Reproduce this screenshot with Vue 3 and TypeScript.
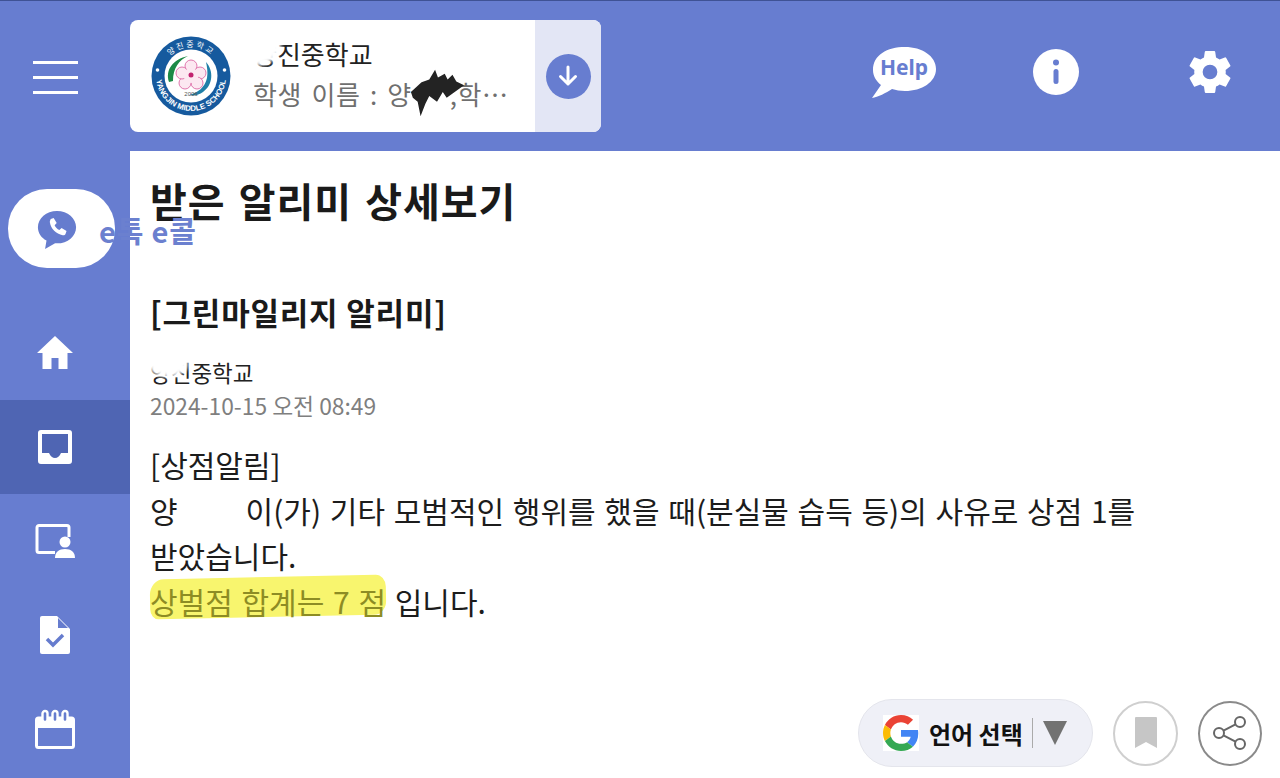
<template>
  <div class="page">
    <aside class="side">
      <button class="menu" aria-label="menu"><span></span><span></span><span></span></button>

      <div class="talk">
        <svg width="42" height="42" viewBox="0 0 44 44">
          <path d="M22 2C10.700 2 2 9.600 2 19c0 6 3.500 11 9 14l-1.500 9L20 36h2c11.300 0 20-7.600 20-17S33.300 2 22 2z" fill="#667cce" />
          <path d="M15.500 10.500l3-1 3.200 5.200-2.200 2.300c.9 2.200 2.700 4 5 5l2.300-2.200 5.200 3.200-1 3c-.5 1.300-1.700 1.700-3 1.500-7-1.100-12.300-6.500-13.500-13.500-.2-1.300.7-3 1-3.500z" fill="#fff" />
        </svg>
      </div>
      <span class="talk-label">e톡 e콜</span>

      <nav class="nav">
        <a v-for="item in navItems" :key="item.id" class="nav-row" :class="{ active: item.id === 'inbox' }">
          <svg v-if="item.id === 'home'" width="38" height="36" viewBox="0 0 38 36" fill="#fff">
            <path d="M19 1L1 18h5.500v16h9V23h7v11h9V18H37L19 1z" />
          </svg>
          <svg v-else-if="item.id === 'inbox'" width="36" height="36" viewBox="0 0 36 36">
            <path fill="#fff" fill-rule="evenodd" d="M4 1h28a3 3 0 0 1 3 3v28a3 3 0 0 1-3 3H4a3 3 0 0 1-3-3V4a3 3 0 0 1 3-3zm1 4v19h7c1.500 3.500 3.500 5 6 5s4.500-1.500 6-5h7V5H5z" />
          </svg>
          <svg v-else-if="item.id === 'board'" width="40" height="36" viewBox="0 0 40 36">
            <path fill="none" stroke="#fff" stroke-width="3" d="M34 14V4.500a2 2 0 0 0-2-2H4a2 2 0 0 0-2 2v23a2 2 0 0 0 2 2h16" />
            <circle cx="30" cy="19" r="5.500" fill="#fff" />
            <path fill="#fff" d="M20 35c0-6 4-9 10-9s10 3 10 9H20z" />
          </svg>
          <svg v-else-if="item.id === 'doc'" width="32" height="40" viewBox="0 0 32 40">
            <path fill="#fff" d="M3 1h15l13 13v23a2 2 0 0 1-2 2H3a2 2 0 0 1-2-2V3a2 2 0 0 1 2-2z" />
            <path fill="#667cce" d="M19 3l10 10H19z" />
            <path fill="none" stroke="#667cce" stroke-width="3.500" d="M8 24l6 6 10-10" />
          </svg>
          <svg v-else width="40" height="40" viewBox="0 0 40 40">
            <rect x="1.500" y="9" width="37" height="29.500" rx="2" fill="none" stroke="#fff" stroke-width="3" />
            <rect x="1.500" y="9" width="37" height="10" fill="#fff" />
            <g fill="#667cce" stroke="#fff" stroke-width="2.400">
              <rect x="7.500" y="2" width="5" height="11" rx="2.500" />
              <rect x="17.500" y="2" width="5" height="11" rx="2.500" />
              <rect x="27.500" y="2" width="5" height="11" rx="2.500" />
            </g>
          </svg>
        </a>
      </nav>
    </aside>

    <div class="main">
      <header class="top">
        <div class="card">
          <svg class="logo" width="80" height="80" viewBox="0 0 80 80">
            <defs>
              <path id="arcTop" d="M11 40a29 29 0 0 1 58 0" />
              <path id="arcBottom" d="M5 40a35 35 0 0 0 70 0" />
            </defs>
            <circle cx="40" cy="40" r="39.500" fill="#165a9e" />
            <circle cx="40" cy="40" r="26.500" fill="#fff" />
            <text class="logo-top"><textPath href="#arcTop" startOffset="50%" text-anchor="middle">양진중학교</textPath></text>
            <text class="logo-bottom"><textPath href="#arcBottom" startOffset="50%" text-anchor="middle">YANGJIN MIDDLE SCHOOL</textPath></text>
            <circle cx="6.500" cy="34" r="1.800" fill="#fff" />
            <circle cx="73.500" cy="34" r="1.800" fill="#fff" />
            <path d="M18 46c-4-12 4-23 19-26-9 4-15 12-15 25z" fill="#1c8a46" />
            <path d="M55 26c8 9 7 23-3 30-4 3-9 4-14 3 9-2 16-8 18-17 1-6 0-11-1-16z" fill="#1f7fa8" />
            <g fill="#fce8f1" stroke="#dc6aa6" stroke-width=".9">
              <circle cx="40" cy="30" r="6" />
              <circle cx="49" cy="37" r="6" />
              <circle cx="46" cy="47" r="6" />
              <circle cx="34" cy="47" r="6" />
              <circle cx="31" cy="37" r="6" />
            </g>
            <circle cx="40" cy="39.500" r="7.500" fill="#fce8f1" />
            <circle cx="40" cy="39" r="2.500" fill="#c2226f" />
            <text x="40" y="60" class="logo-year">2006</text>
          </svg>
          <div class="card-text">
            <div class="school">양진중학교</div>
            <div class="student">학생 이름 : 양<span class="blank-head"></span>,학년 반 번호</div>
            <span class="wipe wipe-head"></span>
            <svg class="scribble" width="58" height="50" viewBox="0 0 60 50">
              <path fill="#232323" d="M3 24L14 14 22 11 28 1 31 9 38 5 41 11 46 6 50 13 58 17 44 27 40 30 36 24 30 34 22 28 18 36 13 49 10 34 5 30z" />
            </svg>
          </div>
          <button class="card-arrow" aria-label="open">
            <span class="arrow-dot">
              <svg width="24" height="24" viewBox="0 0 24 24" fill="none" stroke="#fff" stroke-width="3" stroke-linecap="round" stroke-linejoin="round">
                <path d="M12 3v17M4.500 12.500L12 20l7.500-7.500" />
              </svg>
            </span>
          </button>
        </div>

        <div class="top-icons">
          <svg width="66" height="53" viewBox="0 0 66 53">
            <path fill="#fff" d="M34 1C16 1 2 9 2 24c0 6 3 11 8 15L1 52c6-1 14-5 20-9 4 1 8 2 13 2 17 0 31-9 31-22S51 1 34 1z" />
            <text x="33" y="29" class="help-text">Help</text>
          </svg>
          <svg width="46" height="46" viewBox="0 0 46 46">
            <circle cx="23" cy="23" r="23" fill="#fff" />
            <circle cx="23" cy="13.500" r="3" fill="#677dd0" />
            <rect x="20.500" y="20" width="5" height="15" rx="2.500" fill="#677dd0" />
          </svg>
          <svg class="gear" width="42" height="42" viewBox="2 2 20 20">
            <path fill="#fff" d="M19.430 12.980c.04-.32.07-.64.07-.98s-.03-.66-.07-.98l2.110-1.650c.19-.15.240-.42.120-.64l-2-3.460c-.12-.22-.39-.3-.61-.22l-2.490 1c-.52-.4-1.080-.73-1.690-.98l-.38-2.650A.488.488 0 0 0 14 2h-4c-.25 0-.46.180-.49.420l-.38 2.650c-.61.250-1.170.59-1.690.98l-2.490-1c-.23-.09-.49 0-.61.220l-2 3.460c-.13.220-.07.490.12.640l2.110 1.650c-.04.320-.07.650-.07.980s.03.660.07.980l-2.110 1.650c-.19.150-.240.420-.12.640l2 3.460c.12.220.39.300.61.220l2.490-1c.52.400 1.080.730 1.690.980l.38 2.650c.03.240.24.420.49.420h4c.25 0 .46-.180.49-.42l.38-2.650c.61-.250 1.170-.590 1.690-.980l2.490 1c.23.090.49 0 .61-.220l2-3.460c.12-.220.070-.490-.12-.640l-2.110-1.650zM12 15.500a3.500 3.500 0 1 1 0-7 3.500 3.500 0 0 1 0 7z" />
          </svg>
        </div>
      </header>

      <main class="content">
        <h1>받은 알리미 상세보기</h1>
        <h2>[그린마일리지 알리미]</h2>
        <div class="sender">
          <span class="wipe wipe-sender"></span>
          양진중학교
        </div>
        <div class="date">2024-10-15 오전 08:49</div>
        <div class="message">
          <p>[상점알림]</p>
          <p>양<span class="blank-name"></span>이(가) 기타 모범적인 행위를 했을 때(분실물 습득 등)의 사유로 상점 1를 받았습니다.</p>
          <p><mark>상벌점 합계는 7 점</mark> 입니다.</p>
        </div>
      </main>
    </div>

    <div class="actions">
      <button class="lang">
        <svg class="g-logo" width="36" height="36" viewBox="0 0 48 48">
          <path fill="#EA4335" d="M24 9.500c3.540 0 6.710 1.220 9.210 3.600l6.850-6.850C35.900 2.380 30.470 0 24 0 14.620 0 6.510 5.380 2.560 13.220l7.980 6.190C12.430 13.720 17.740 9.500 24 9.500z" />
          <path fill="#4285F4" d="M46.980 24.550c0-1.570-.15-3.090-.38-4.550H24v9.020h12.940c-.58 2.960-2.260 5.480-4.780 7.180l7.730 6c4.510-4.180 7.090-10.360 7.090-17.650z" />
          <path fill="#FBBC05" d="M10.530 28.590c-.48-1.450-.76-2.990-.76-4.590s.27-3.140.76-4.590l-7.980-6.190C.92 16.460 0 20.120 0 24c0 3.880.92 7.540 2.560 10.780l7.970-6.190z" />
          <path fill="#34A853" d="M24 48c6.480 0 11.930-2.130 15.890-5.810l-7.730-6c-2.150 1.450-4.920 2.300-8.160 2.300-6.260 0-11.570-4.220-13.470-9.910l-7.980 6.190C6.510 42.620 14.620 48 24 48z" />
        </svg>
        <span class="lang-text">언어 선택</span>
        <span class="lang-sep"></span>
        <span class="lang-caret"></span>
      </button>
      <button class="round bookmark" aria-label="bookmark">
        <svg width="24" height="32" viewBox="0 0 24 32"><path fill="#c6c6c6" d="M2 0h20a1 1 0 0 1 1 1v30l-11-6-11 6V1a1 1 0 0 1 1-1z" /></svg>
      </button>
      <button class="round share" aria-label="share">
        <svg width="36" height="36" viewBox="0 0 36 36" fill="none" stroke="#666" stroke-width="2">
          <circle cx="28" cy="7" r="5" />
          <circle cx="7" cy="18" r="5" />
          <circle cx="28" cy="29" r="5" />
          <path d="M11.500 15.700l12-6.400M11.500 20.300l12 6.400" />
        </svg>
      </button>
    </div>
  </div>
</template>

<script setup lang="ts">
const navItems = [
  { id: 'home' },
  { id: 'inbox' },
  { id: 'board' },
  { id: 'doc' },
  { id: 'calendar' },
];
</script>

<style>
html, body { margin: 0; background: #fff; }
</style>

<style scoped>
.page {
  position: relative;
  display: flex;
  height: 778px;
  overflow: hidden;
  background: #677dd0;
  border-top: 1px solid #3f5295;
  box-sizing: border-box;
  font-family: "Noto Sans CJK KR", "Noto Sans", sans-serif;
  color: #1c1c1c;
}
button { border: 0; padding: 0; background: none; font-family: inherit; }

.side { position: relative; width: 130px; flex: none; }
.menu {
  display: flex;
  flex-direction: column;
  gap: 12px;
  width: 45px;
  margin: 60px 0 0 33px;
}
.menu span { display: block; height: 3px; background: #fff; }
.talk {
  position: absolute;
  left: 8px;
  top: 188px;
  width: 107px;
  height: 79px;
  border-radius: 39px;
  background: #fff;
  display: flex;
  align-items: center;
  padding-left: 28px;
  padding-top: 3px;
  box-sizing: border-box;
}
.talk-label {
  position: absolute;
  left: 99px;
  top: 209px;
  z-index: 3;
  font-size: 29px;
  line-height: 40px;
  font-weight: 700;
  letter-spacing: 0.800px;
  color: #6b80cf;
  white-space: nowrap;
}
.nav { position: absolute; left: 0; right: 0; top: 305px; }
.nav-row {
  display: flex;
  align-items: center;
  justify-content: center;
  height: 94px;
  padding-right: 20px;
  box-sizing: border-box;
}
.nav-row.active { background: #4f65b3; }

.main { flex: 1; min-width: 0; display: flex; flex-direction: column; }
.top {
  display: flex;
  align-items: flex-start;
  height: 150px;
  flex: none;
  padding-top: 19px;
  box-sizing: border-box;
}
.card {
  display: flex;
  align-items: center;
  width: 471px;
  height: 112px;
  border-radius: 8px;
  background: #fff;
  overflow: hidden;
}
.logo { flex: none; margin-left: 21px; }
.logo-top { font-size: 8px; fill: #fff; letter-spacing: 2px; }
.logo-bottom { font-size: 7.800px; font-weight: 700; fill: #fff; font-family: "Liberation Sans", sans-serif; }
.logo-year { font-size: 6px; fill: #555; text-anchor: middle; font-family: "Liberation Sans", sans-serif; }
.card-text { position: relative; flex: 1; min-width: 0; padding: 0 24px 4px 22px; }
.school { font-size: 26px; line-height: 40px; color: #222; }
.student {
  font-size: 26px;
  line-height: 40px;
  word-spacing: 3px;
  letter-spacing: 0.600px;
  color: #6f6f6f;
  white-space: nowrap;
  overflow: hidden;
  text-overflow: ellipsis;
}
.blank-head { display: inline-block; width: 38px; }
.wipe { position: absolute; background: #fff; border-radius: 50%; filter: blur(2px); }
.wipe-head { left: 0; top: -12px; width: 50px; height: 44px; }
.scribble { position: absolute; left: 177px; top: 34px; }
.card-arrow {
  flex: none;
  align-self: stretch;
  display: flex;
  align-items: center;
  justify-content: center;
  width: 66px;
  background: #e3e6f5;
}
.arrow-dot {
  display: flex;
  align-items: center;
  justify-content: center;
  width: 45px;
  height: 45px;
  border-radius: 50%;
  background: #677dd0;
}
.top-icons {
  display: flex;
  align-items: center;
  gap: 96px;
  height: 104px;
  margin-left: 270px;
}
.gear { margin-left: 14px; }
.help-text { font-size: 21px; font-weight: 700; fill: #677dd0; text-anchor: middle; font-family: "Noto Sans", sans-serif; }

.content { flex: 1; background: #fff; padding: 0 130px 0 20px; }
h1 {
  margin: 20px 0 0;
  font-size: 40px;
  line-height: 58px;
  font-weight: 700;
  letter-spacing: 1px;
  word-spacing: 3px;
  color: #1a1a1a;
}
h2 {
  margin: 62px 0 0;
  font-size: 31px;
  line-height: 42px;
  font-weight: 700;
  letter-spacing: 0.800px;
  color: #1a1a1a;
}
.sender { position: relative; margin-top: 22px; font-size: 22.500px; line-height: 34px; color: #222; }
.wipe-sender { left: -2px; top: -4px; width: 40px; height: 26px; }
.date { font-size: 22.800px; line-height: 34px; color: #7f7f7f; }
.message { margin-top: 19px; font-size: 30px; line-height: 45.500px; color: #1c1c1c; word-break: keep-all; word-spacing: 2px; }
.message p { margin: 0; position: relative; isolation: isolate; }
.blank-name { display: inline-block; width: 68px; }
mark {
  position: relative;
  background: none;
  color: #8d8c24;
}
mark::before {
  content: "";
  position: absolute;
  left: 0;
  right: 0;
  top: -2px;
  bottom: 6px;
  z-index: -1;
  background: #f8f56e;
  border-radius: 14px 10px 12px 8px / 16px 12px 14px 10px;
  transform: rotate(-1.200deg);
}

.actions {
  position: absolute;
  right: 18px;
  bottom: 11px;
  display: flex;
  align-items: center;
  gap: 20px;
}
.lang {
  display: flex;
  align-items: center;
  width: 235px;
  height: 68px;
  padding-left: 24px;
  box-sizing: border-box;
  border-radius: 34px;
  background: #eff0f7;
  border: 1px solid #e4e5ec;
}
.g-logo { background: #fff; }
.lang-text { margin-left: 10px; font-size: 24px; font-weight: 700; color: #111; white-space: nowrap; }
.lang-sep { width: 1px; height: 30px; margin-left: 9px; background: #aaa; }
.lang-caret {
  margin-left: 10px;
  border-left: 12px solid transparent;
  border-right: 12px solid transparent;
  border-top: 24px solid #727272;
}
.round {
  display: flex;
  align-items: center;
  justify-content: center;
  height: 65px;
  border-radius: 50%;
  box-sizing: border-box;
  background: #fff;
}
.bookmark { width: 65px; border: 2px solid #cfcfcf; }
.share { width: 64px; border: 2px solid #8a8a8a; }
</style>
